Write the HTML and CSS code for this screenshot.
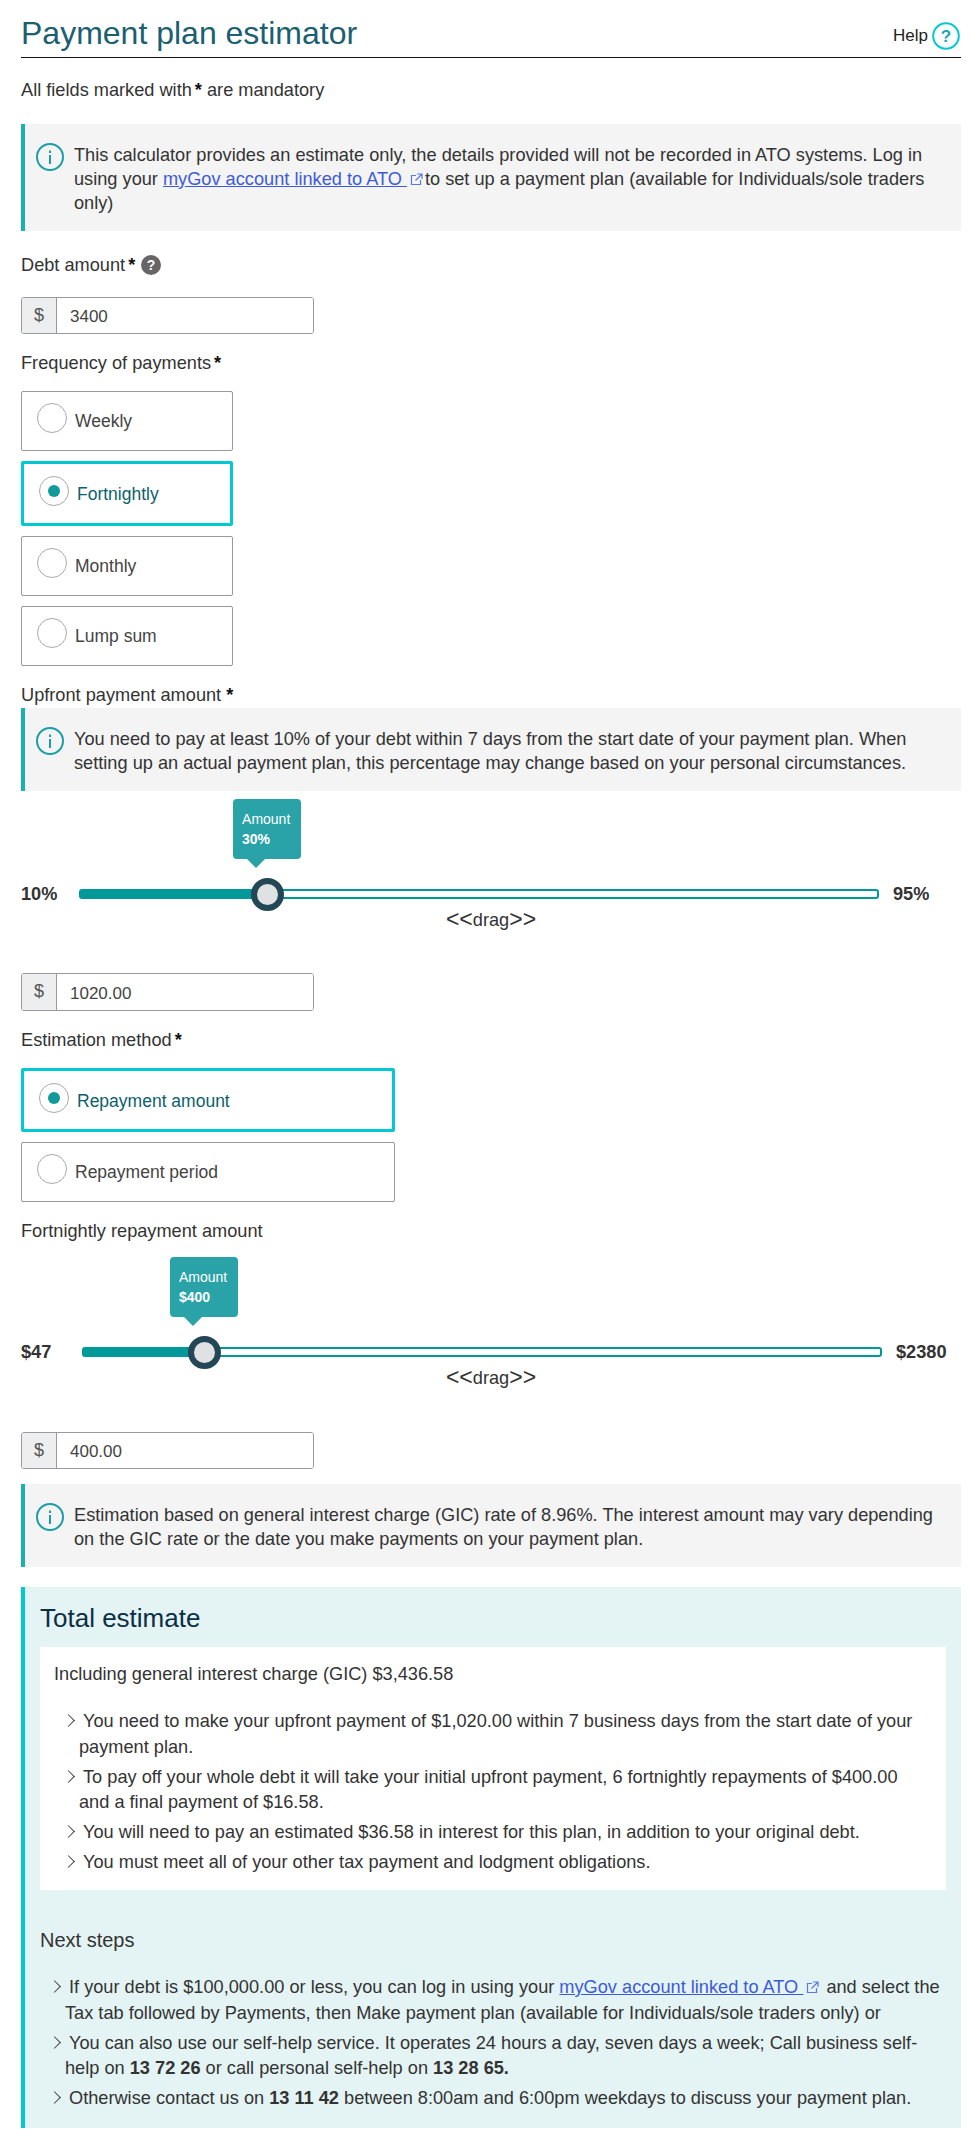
FILE: index.html
```html
<!DOCTYPE html>
<html lang="en">
<head>
    <meta charset="UTF-8">
    <meta name="viewport" content="width=device-width, initial-scale=1.0">
    <title>Payment plan estimator</title>
    <link rel="stylesheet" href="styles.css">
</head>
<body>
    <div class="page">
        <div class="header">
            <h1>Payment plan estimator</h1>
            <a class="help" href="#">Help
                <svg class="help-icon" width="28" height="28" viewBox="0 0 28 28">
                    <circle cx="14" cy="14" r="12.8" fill="none" stroke="#00c8d4" stroke-width="2"/>
                    <text x="14" y="20" text-anchor="middle" font-size="17" font-weight="bold" fill="#19a5b5">?</text>
                </svg>
            </a>
        </div>

        <p class="mandatory">All fields marked with<span class="star">*</span> are mandatory</p>

        <div class="info info-first">
            <svg class="info-icon" width="28" height="28" viewBox="0 0 28 28">
                <circle cx="14" cy="14" r="13" fill="none" stroke="#1a9fa8" stroke-width="2"/>
                <rect x="13" y="12" width="2" height="9" fill="#1a9fa8"/>
                <rect x="13" y="7.500" width="2" height="2.500" fill="#1a9fa8"/>
            </svg>
            <p>This calculator provides an estimate only, the details provided will not be recorded in ATO systems. Log in using your <a href="#">myGov account linked to ATO&nbsp;</a><svg class="ext" width="13" height="13" viewBox="0 0 13 13"><path d="M6 2.500H1.500V11.500H10.500V7M7 1H12V6M12 1L5.500 7.500" fill="none" stroke="#5b78e0" stroke-width="1.200"/></svg>to set up a payment plan (available for Individuals/sole traders only)</p>
        </div>

        <div class="label label-debt">Debt amount<span class="star">*</span>
            <svg class="tip-icon" width="20" height="20" viewBox="0 0 20 20">
                <circle cx="10" cy="10" r="10" fill="#666"/>
                <text x="10" y="15" text-anchor="middle" font-size="14" font-weight="bold" fill="#fff">?</text>
            </svg>
        </div>
        <div class="money money-first"><span>$</span><input type="text" value="3400"></div>

        <div class="label">Frequency of payments<span class="star">*</span></div>
        <div class="options">
            <label class="option"><i class="radio"></i>Weekly</label>
            <label class="option selected"><i class="radio"></i>Fortnightly</label>
            <label class="option"><i class="radio"></i>Monthly</label>
            <label class="option"><i class="radio"></i>Lump sum</label>
        </div>

        <div class="label label-tight">Upfront payment amount<span class="star star-wide">*</span></div>
        <div class="info">
            <svg class="info-icon" width="28" height="28" viewBox="0 0 28 28">
                <circle cx="14" cy="14" r="13" fill="none" stroke="#1a9fa8" stroke-width="2"/>
                <rect x="13" y="12" width="2" height="9" fill="#1a9fa8"/>
                <rect x="13" y="7.500" width="2" height="2.500" fill="#1a9fa8"/>
            </svg>
            <p>You need to pay at least 10% of your debt within 7 days from the start date of your payment plan. When setting up an actual payment plan, this percentage may change based on your personal circumstances.</p>
        </div>

        <div class="slider">
            <div class="slider-row">
                <span class="slider-min">10%</span>
                <div class="track">
                    <div class="fill" style="width: 23.5%"></div>
                    <div class="thumb" style="left: 23.5%"></div>
                    <div class="bubble" style="left: 23.5%">Amount<br><strong>30%</strong></div>
                </div>
                <span class="slider-max">95%</span>
            </div>
            <div class="drag"><b>&lt;&lt;</b>drag<b>&gt;&gt;</b></div>
        </div>
        <div class="money money-tall"><span>$</span><input type="text" value="1020.00"></div>

        <div class="label">Estimation method<span class="star">*</span></div>
        <div class="options options-wide">
            <label class="option selected"><i class="radio"></i>Repayment amount</label>
            <label class="option"><i class="radio"></i>Repayment period</label>
        </div>

        <div class="label">Fortnightly repayment amount</div>
        <div class="slider slider-second">
            <div class="slider-row">
                <span class="slider-min">$47</span>
                <div class="track">
                    <div class="fill" style="width: 15.2%"></div>
                    <div class="thumb" style="left: 15.2%"></div>
                    <div class="bubble" style="left: 15.2%">Amount<br><strong>$400</strong></div>
                </div>
                <span class="slider-max">$2380</span>
            </div>
            <div class="drag"><b>&lt;&lt;</b>drag<b>&gt;&gt;</b></div>
        </div>
        <div class="money money-last"><span>$</span><input type="text" value="400.00"></div>

        <div class="info info-last">
            <svg class="info-icon" width="28" height="28" viewBox="0 0 28 28">
                <circle cx="14" cy="14" r="13" fill="none" stroke="#1a9fa8" stroke-width="2"/>
                <rect x="13" y="12" width="2" height="9" fill="#1a9fa8"/>
                <rect x="13" y="7.500" width="2" height="2.500" fill="#1a9fa8"/>
            </svg>
            <p>Estimation based on general interest charge (GIC) rate of 8.96%. The interest amount may vary depending on the GIC rate or the date you make payments on your payment plan.</p>
        </div>

        <div class="total">
            <h2>Total estimate</h2>
            <div class="total-card">
                <p>Including general interest charge (GIC) $3,436.58</p>
                <ul class="chevrons">
                    <li>You need to make your upfront payment of $1,020.00 within 7 business days from the start date of your payment plan.</li>
                    <li>To pay off your whole debt it will take your initial upfront payment, 6 fortnightly repayments of $400.00 and a final payment of $16.58.</li>
                    <li>You will need to pay an estimated $36.58 in interest for this plan, in addition to your original debt.</li>
                    <li>You must meet all of your other tax payment and lodgment obligations.</li>
                </ul>
            </div>
            <h3>Next steps</h3>
            <ul class="chevrons chevrons-steps">
                <li>If your debt is $100,000.00 or less, you can log in using your <a href="#">myGov account linked to ATO&nbsp;</a><svg class="ext" width="13" height="13" viewBox="0 0 13 13"><path d="M6 2.500H1.500V11.500H10.500V7M7 1H12V6M12 1L5.500 7.500" fill="none" stroke="#5b78e0" stroke-width="1.200"/></svg> and select the Tax tab followed by Payments, then Make payment plan (available for Individuals/sole traders only) or</li>
                <li>You can also use our self-help service. It operates 24 hours a day, seven days a week; Call business self-help on <strong>13 72 26</strong> or call personal self-help on <strong>13 28 65.</strong></li>
                <li>Otherwise contact us on <strong>13 11 42</strong> between 8:00am and 6:00pm weekdays to discuss your payment plan.</li>
            </ul>
        </div>
    </div>
</body>
</html>
```

FILE: styles.css
```css
* {
    box-sizing: border-box;
}
body {
    font-family: "Liberation Sans", Arial, sans-serif;
    font-size: 18.200px;
    line-height: 24px;
    color: #333;
    margin: 0;
    background: #fff;
}
p, h1, h2, h3, ul {
    margin: 0;
    padding: 0;
}
a {
    color: #3d5bd9;
}
.page {
    padding: 0 12px 0 21px;
}
.header {
    display: flex;
    justify-content: space-between;
    align-items: center;
    height: 58px;
    border-bottom: 1px solid #111;
}
.header h1 {
    font-size: 32px;
    font-weight: normal;
    line-height: 40px;
    color: #1a6070;
    margin-top: 8px;
}
.help {
    display: flex;
    align-items: center;
    gap: 4px;
    color: #222;
    font-size: 17px;
    text-decoration: none;
    margin-top: 14px;
    margin-right: 1px;
}
.mandatory {
    margin-top: 20px;
}
.star {
    font-weight: bold;
    color: #111;
    margin-left: 3px;
}
.star-wide {
    margin-left: 5px;
}
.info {
    display: flex;
    gap: 10px;
    background: #f4f4f4;
    border-left: 4px solid #1ab0b3;
    padding: 19px 16px 16px 11px;
}
.info-first {
    margin-top: 22px;
}
.info-last {
    margin-top: 15px;
}
.info-icon {
    flex: none;
}
.ext {
    vertical-align: -1px;
    margin-left: 3px;
    margin-right: 2px;
}
.label {
    margin-top: 17px;
    display: flex;
    align-items: center;
}
.label-debt {
    margin-top: 22px;
}
.label-tight {
    margin-bottom: 1px;
}
.tip-icon {
    margin-left: 6px;
}
.money {
    display: flex;
    width: 293px;
    height: 37px;
    border: 1px solid #999;
    border-radius: 3px;
    overflow: hidden;
    font-size: 17px;
}
.money-first {
    margin-top: 20px;
}
.money-tall {
    margin-top: 41px;
    height: 38px;
}
.money-last {
    margin-top: 42px;
}
.money span {
    width: 35px;
    background: #eceeef;
    border-right: 1px solid #999;
    text-align: center;
    font-size: 18px;
    line-height: 34px;
    color: #555;
}
.money input {
    flex: 1;
    min-width: 0;
    border: none;
    outline: none;
    padding: 3px 12px 0 13px;
    font: inherit;
    color: #444;
}
.options {
    display: flex;
    flex-direction: column;
    gap: 10px;
    margin-top: 16px;
    width: 212px;
}
.options-wide {
    width: 374px;
}
.option {
    display: flex;
    align-items: flex-start;
    height: 60px;
    border: 1px solid #999;
    border-radius: 2px;
    padding: 11px 0 0 15px;
    font-size: 17.500px;
    line-height: 36px;
    color: #444;
}
.radio {
    flex: none;
    position: relative;
    width: 30px;
    height: 30px;
    border: 1px solid #aaa;
    border-radius: 50%;
    margin-right: 8px;
}
.option.selected {
    height: 65px;
    border: 3px solid #00c8d4;
    color: #0d5f6d;
    padding: 12px 0 0 15px;
}
.options-wide .option.selected {
    height: 64px;
}
.option.selected .radio::after {
    content: "";
    position: absolute;
    left: 8px;
    top: 8px;
    width: 12px;
    height: 12px;
    border-radius: 50%;
    background: #109a9c;
}
.slider {
    margin-top: 91px;
}
.slider-second {
    margin-top: 97px;
}
.slider-row {
    display: flex;
    align-items: center;
    height: 24px;
}
.slider-min {
    width: 58px;
    font-weight: bold;
}
.slider-second .slider-min {
    width: 61px;
}
.slider-max {
    margin-left: 14px;
    font-weight: bold;
}
.track {
    position: relative;
    width: 800px;
    height: 10px;
    border: 2px solid #009999;
    border-radius: 3px;
    background: #fff;
}
.fill {
    height: 100%;
    background: #009999;
}
.thumb {
    position: absolute;
    top: -13px;
    width: 33px;
    height: 33px;
    margin-left: -17px;
    border: 6px solid #234756;
    border-radius: 50%;
    background: #dfe1e3;
}
.bubble {
    position: absolute;
    top: -92px;
    width: 68px;
    height: 60px;
    margin-left: -35px;
    padding: 10px 9px;
    border-radius: 4px;
    background: #29a3a8;
    color: #fff;
    font-size: 14px;
    line-height: 20px;
}
.bubble::after {
    content: "";
    position: absolute;
    left: 14px;
    top: 60px;
    border: 9px solid transparent;
    border-top-color: #29a3a8;
    border-bottom: none;
}
.drag {
    margin-top: 2px;
    text-align: center;
}
.drag b {
    font-size: 23px;
    font-weight: 100;
    line-height: 1;
    vertical-align: -1px;
}
.total {
    margin-top: 20px;
    height: 541px;
    background: #e4f3f4;
    border-left: 4px solid #00c8d4;
    padding: 15px 15px 0 15px;
}
.total h2 {
    font-size: 26px;
    font-weight: normal;
    line-height: 32px;
    color: #0b2f45;
}
.total-card {
    margin-top: 13px;
    background: #fff;
    padding: 15px 20px 10px 14px;
}
.total h3 {
    margin-top: 38px;
    font-size: 20px;
    font-weight: normal;
    line-height: 24px;
}
.chevrons {
    list-style: none;
    margin-top: 23px;
    padding-left: 25px;
}
.chevrons li {
    text-indent: -14px;
    line-height: 25.600px;
    margin-bottom: 4.400px;
}
.chevrons li::before {
    content: "";
    display: inline-block;
    width: 8px;
    height: 8px;
    margin-right: 10px;
    margin-left: -1px;
    border-top: 1px solid #444;
    border-right: 1px solid #444;
    transform: rotate(45deg);
    vertical-align: 2px;
}
.chevrons-steps {
    margin-top: 23px;
    padding-right: 6px;
}
```
